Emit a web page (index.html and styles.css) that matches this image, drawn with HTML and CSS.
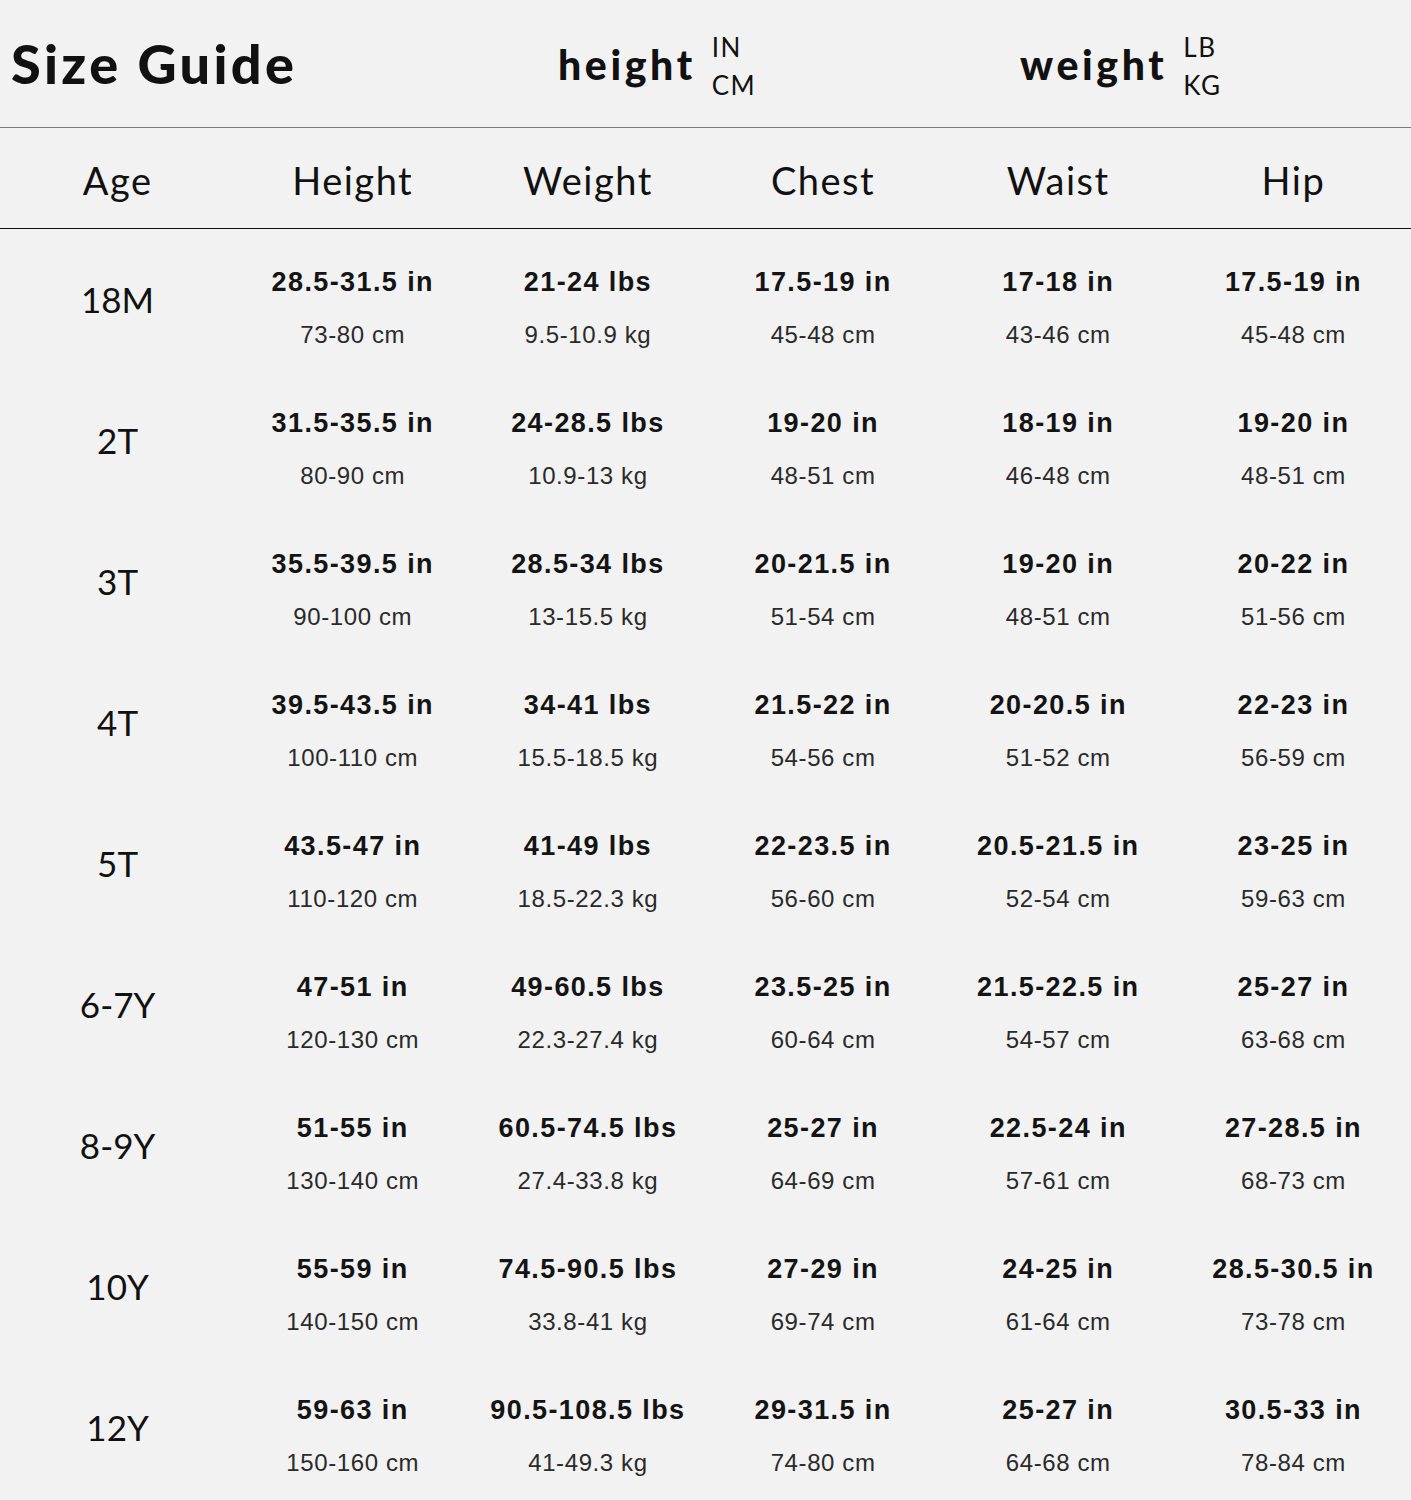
FILE: index.html
```html
<!DOCTYPE html>
<html>
<head>
<meta charset="utf-8">
<link rel="stylesheet" href="styles.css">
</head>
<body>
<div class="page">
  <header class="top">
    <h1 class="title">Size Guide</h1>
    <div class="unit"><span class="unit-name">height</span><span class="unit-stack"><span>IN</span><span>CM</span></span></div>
    <div class="unit"><span class="unit-name">weight</span><span class="unit-stack"><span>LB</span><span>KG</span></span></div>
  </header>
  <div class="heads">
    <div>Age</div><div>Height</div><div>Weight</div><div>Chest</div><div>Waist</div><div>Hip</div>
  </div>
  <div class="rows">
    <div class="row">
      <div class="age">18M</div>
      <div class="cell"><b>28.5-31.5 in</b><span>73-80 cm</span></div>
      <div class="cell"><b>21-24 lbs</b><span>9.5-10.9 kg</span></div>
      <div class="cell"><b>17.5-19 in</b><span>45-48 cm</span></div>
      <div class="cell"><b>17-18 in</b><span>43-46 cm</span></div>
      <div class="cell"><b>17.5-19 in</b><span>45-48 cm</span></div>
    </div>
    <div class="row">
      <div class="age">2T</div>
      <div class="cell"><b>31.5-35.5 in</b><span>80-90 cm</span></div>
      <div class="cell"><b>24-28.5 lbs</b><span>10.9-13 kg</span></div>
      <div class="cell"><b>19-20 in</b><span>48-51 cm</span></div>
      <div class="cell"><b>18-19 in</b><span>46-48 cm</span></div>
      <div class="cell"><b>19-20 in</b><span>48-51 cm</span></div>
    </div>
    <div class="row">
      <div class="age">3T</div>
      <div class="cell"><b>35.5-39.5 in</b><span>90-100 cm</span></div>
      <div class="cell"><b>28.5-34 lbs</b><span>13-15.5 kg</span></div>
      <div class="cell"><b>20-21.5 in</b><span>51-54 cm</span></div>
      <div class="cell"><b>19-20 in</b><span>48-51 cm</span></div>
      <div class="cell"><b>20-22 in</b><span>51-56 cm</span></div>
    </div>
    <div class="row">
      <div class="age">4T</div>
      <div class="cell"><b>39.5-43.5 in</b><span>100-110 cm</span></div>
      <div class="cell"><b>34-41 lbs</b><span>15.5-18.5 kg</span></div>
      <div class="cell"><b>21.5-22 in</b><span>54-56 cm</span></div>
      <div class="cell"><b>20-20.5 in</b><span>51-52 cm</span></div>
      <div class="cell"><b>22-23 in</b><span>56-59 cm</span></div>
    </div>
    <div class="row">
      <div class="age">5T</div>
      <div class="cell"><b>43.5-47 in</b><span>110-120 cm</span></div>
      <div class="cell"><b>41-49 lbs</b><span>18.5-22.3 kg</span></div>
      <div class="cell"><b>22-23.5 in</b><span>56-60 cm</span></div>
      <div class="cell"><b>20.5-21.5 in</b><span>52-54 cm</span></div>
      <div class="cell"><b>23-25 in</b><span>59-63 cm</span></div>
    </div>
    <div class="row">
      <div class="age">6-7Y</div>
      <div class="cell"><b>47-51 in</b><span>120-130 cm</span></div>
      <div class="cell"><b>49-60.5 lbs</b><span>22.3-27.4 kg</span></div>
      <div class="cell"><b>23.5-25 in</b><span>60-64 cm</span></div>
      <div class="cell"><b>21.5-22.5 in</b><span>54-57 cm</span></div>
      <div class="cell"><b>25-27 in</b><span>63-68 cm</span></div>
    </div>
    <div class="row">
      <div class="age">8-9Y</div>
      <div class="cell"><b>51-55 in</b><span>130-140 cm</span></div>
      <div class="cell"><b>60.5-74.5 lbs</b><span>27.4-33.8 kg</span></div>
      <div class="cell"><b>25-27 in</b><span>64-69 cm</span></div>
      <div class="cell"><b>22.5-24 in</b><span>57-61 cm</span></div>
      <div class="cell"><b>27-28.5 in</b><span>68-73 cm</span></div>
    </div>
    <div class="row">
      <div class="age">10Y</div>
      <div class="cell"><b>55-59 in</b><span>140-150 cm</span></div>
      <div class="cell"><b>74.5-90.5 lbs</b><span>33.8-41 kg</span></div>
      <div class="cell"><b>27-29 in</b><span>69-74 cm</span></div>
      <div class="cell"><b>24-25 in</b><span>61-64 cm</span></div>
      <div class="cell"><b>28.5-30.5 in</b><span>73-78 cm</span></div>
    </div>
    <div class="row">
      <div class="age">12Y</div>
      <div class="cell"><b>59-63 in</b><span>150-160 cm</span></div>
      <div class="cell"><b>90.5-108.5 lbs</b><span>41-49.3 kg</span></div>
      <div class="cell"><b>29-31.5 in</b><span>74-80 cm</span></div>
      <div class="cell"><b>25-27 in</b><span>64-68 cm</span></div>
      <div class="cell"><b>30.5-33 in</b><span>78-84 cm</span></div>
    </div>
  </div>
</div>
</body>
</html>
```

FILE: styles.css
```css
html, body {
  margin: 0;
  padding: 0;
  background: #f2f2f2;
}
.page {
  width: 1411px;
  height: 1500px;
  background: #f2f2f2;
  color: #111;
  overflow: hidden;
}
.top {
  height: 127px;
  border-bottom: 1px solid #7a7a7a;
  display: grid;
  grid-template-columns: 558px 462px 1fr;
  align-items: center;
}
.title {
  margin: 0 0 0 11px;
  font-family: "Lato", "Liberation Sans", sans-serif;
  font-weight: 900;
  font-size: 54px;
  letter-spacing: 3.3px;
  color: #111;
}
.unit {
  display: flex;
  align-items: center;
  gap: 16px;
  font-family: "Lato", "Liberation Sans", sans-serif;
}
.unit-name {
  font-weight: 900;
  font-size: 41px;
  letter-spacing: 3.6px;
  padding-top: 2px;
}
.unit-stack {
  display: flex;
  flex-direction: column;
  font-size: 26px;
  line-height: 38px;
  letter-spacing: 1.5px;
  padding-top: 4px;
}
.heads {
  height: 101px;
  border-bottom: 1px solid #111;
  display: grid;
  grid-template-columns: repeat(6, 1fr);
  align-items: center;
  text-align: center;
  font-family: "Lato", "Liberation Sans", sans-serif;
  font-size: 38px;
  letter-spacing: 1.5px;
  padding-top: 4px;
  box-sizing: border-box;
}
.row {
  height: 141px;
  display: grid;
  grid-template-columns: repeat(6, 1fr);
}
.age {
  display: flex;
  align-items: center;
  justify-content: center;
  font-family: "Lato", "Liberation Sans", sans-serif;
  font-size: 35px;
  padding-bottom: 2px;
}
.cell {
  display: flex;
  flex-direction: column;
  align-items: center;
  padding-top: 36px;
  font-family: "Liberation Sans", Arial, sans-serif;
}
.cell b {
  font-size: 27px;
  line-height: 34px;
  font-weight: 700;
  letter-spacing: 1.4px;
  color: #141414;
}
.cell span {
  margin-top: 19px;
  font-size: 24px;
  line-height: 34px;
  letter-spacing: 0.6px;
  color: #2a2a2a;
}
```
